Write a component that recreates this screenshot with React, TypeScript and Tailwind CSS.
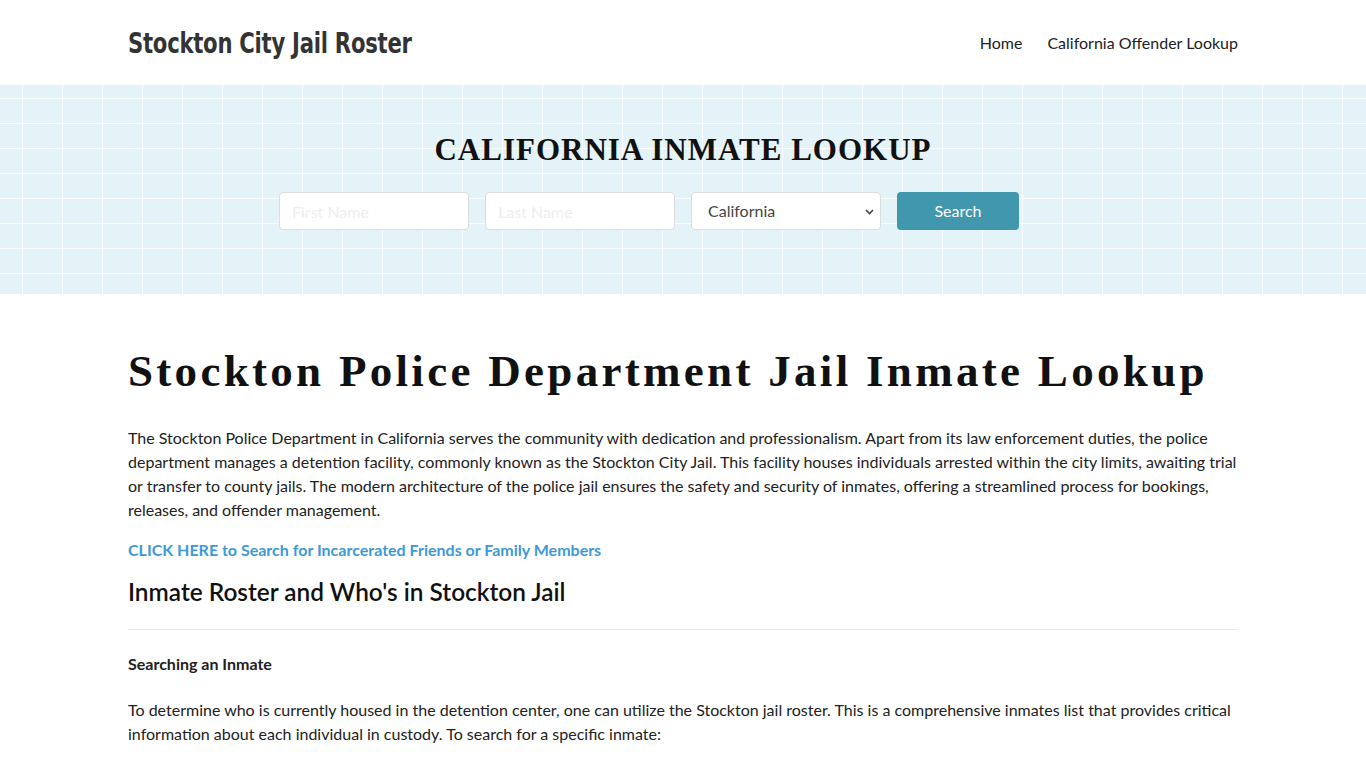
import React from 'react';

const serif = "font-['Liberation_Serif','Times_New_Roman',serif]";

export default function App() {
  return (
    <div className="min-h-screen bg-white text-[#222] font-['Lato','Liberation_Sans',sans-serif]">
      <header className="h-[85px] bg-white">
        <div className="mx-auto w-[1110px] h-full flex items-center justify-between">
          <a className="inline-block mt-[3px] font-['DejaVu_Sans_Condensed','Liberation_Sans_Narrow',sans-serif] font-bold text-[28px] tracking-[-0.3px] text-[#333] scale-x-[0.84] origin-left">
            Stockton City Jail Roster
          </a>
          <nav className="flex items-center gap-[25px] text-[16px] text-[#222]">
            <a>Home</a>
            <a>California Offender Lookup</a>
          </nav>
        </div>
      </header>

      <section className="h-[209px] bg-[#e4f3f7] bg-[linear-gradient(to_right,rgba(255,255,255,0.8)_1.5px,transparent_1.5px),linear-gradient(to_bottom,rgba(255,255,255,0.8)_1.5px,transparent_1.5px)] bg-[size:40px_25px] bg-[position:22px_13px] pt-[47px]">
        <h2 className={`${serif} text-center font-bold text-[31px] tracking-[1px] text-[#111] leading-[36px]`}>
          CALIFORNIA INMATE LOOKUP
        </h2>
        <form className="mt-[24px] flex justify-center gap-[16px] pr-[68px]">
          <input
            placeholder="First Name"
            className="w-[190px] h-[38px] rounded-[4px] border border-[#ddd] bg-white px-3 text-[16px] placeholder:text-[#eee] outline-none"
          />
          <input
            placeholder="Last Name"
            className="w-[190px] h-[38px] rounded-[4px] border border-[#ddd] bg-white px-3 text-[16px] placeholder:text-[#eee] outline-none"
          />
          <div className="relative w-[190px] h-[38px] rounded-[4px] border border-[#ddd] bg-white flex items-center pl-4 text-[16px] text-[#444]">
            California
            <svg className="absolute right-[6px] top-[16px]" width="9" height="6" viewBox="0 0 9 6">
              <path d="M1 1l3.5 3.5L8 1" fill="none" stroke="#444" strokeWidth="1.6" />
            </svg>
          </div>
          <button type="button" className="w-[122px] h-[38px] rounded-[4px] bg-[#4097ae] text-white text-[16px]">
            Search
          </button>
        </form>
      </section>

      <main className="mx-auto w-[1110px] pt-[48px]">
        <h1 className={`${serif} font-bold text-[45px] tracking-[3.3px] leading-[58px] text-[#111]`}>
          Stockton Police Department Jail Inmate Lookup
        </h1>
        <p className="mt-[26px] text-[16px] leading-[24px] text-[#222]">
          The Stockton Police Department in California serves the community with dedication and professionalism. Apart from its law enforcement duties, the police department manages a detention facility, commonly known as the Stockton City Jail. This facility houses individuals arrested within the city limits, awaiting trial or transfer to county jails. The modern architecture of the police jail ensures the safety and security of inmates, offering a streamlined process for bookings, releases, and offender management.
        </p>
        <p className="mt-[16px] text-[16px] leading-[24px]">
          <a className="font-bold text-[#3d9ad6]">CLICK HERE to Search for Incarcerated Friends or Family Members</a>
        </p>
        <h2 className="mt-[13px] text-[24.4px] leading-[34px] font-semibold text-[#111]">
          Inmate Roster and Who's in Stockton Jail
        </h2>
        <hr className="mt-[20px] border-0 border-t border-[#eaeaea]" />
        <h3 className="mt-[23px] text-[16px] font-bold leading-[22px] text-[#222]">Searching an Inmate</h3>
        <p className="mt-[23px] text-[16px] leading-[24px] text-[#222]">
          To determine who is currently housed in the detention center, one can utilize the Stockton jail roster. This is a comprehensive inmates list that provides critical information about each individual in custody. To search for a specific inmate:
        </p>
      </main>
    </div>
  );
}
